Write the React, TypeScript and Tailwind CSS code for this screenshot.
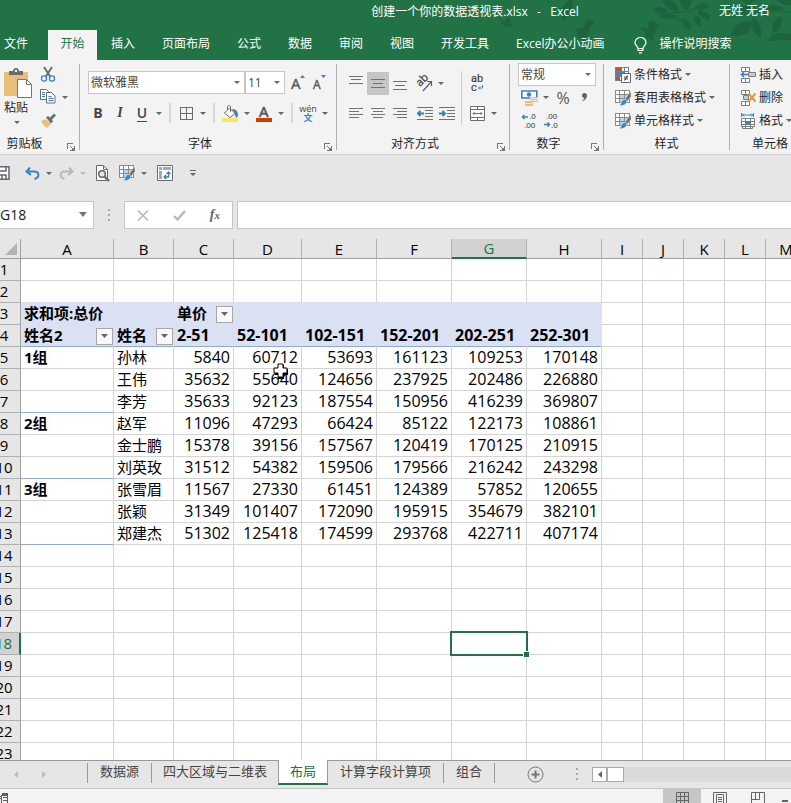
import type { ReactNode } from 'react';
import clsx from 'clsx';

/* ─── Workbook data ─── */
const COLUMNS = [
  { name: 'A', width: 93 },
  { name: 'B', width: 60 },
  { name: 'C', width: 60 },
  { name: 'D', width: 68 },
  { name: 'E', width: 75 },
  { name: 'F', width: 75 },
  { name: 'G', width: 75 },
  { name: 'H', width: 75 },
  { name: 'I', width: 41 },
  { name: 'J', width: 41 },
  { name: 'K', width: 41 },
  { name: 'L', width: 41 },
  { name: 'M', width: 41 },
];

const CELLS: Record<number, string[]> = {
  3: ['求和项:总价', '', '单价'],
  4: ['姓名2', '姓名', '2-51', '52-101', '102-151', '152-201', '202-251', '252-301'],
  5: ['1组', '孙林', '5840', '60712', '53693', '161123', '109253', '170148'],
  6: ['', '王伟', '35632', '55640', '124656', '237925', '202486', '226880'],
  7: ['', '李芳', '35633', '92123', '187554', '150956', '416239', '369807'],
  8: ['2组', '赵军', '11096', '47293', '66424', '85122', '122173', '108861'],
  9: ['', '金士鹏', '15378', '39156', '157567', '120419', '170125', '210915'],
  10: ['', '刘英玫', '31512', '54382', '159506', '179566', '216242', '243298'],
  11: ['3组', '张雪眉', '11567', '27330', '61451', '124389', '57852', '120655'],
  12: ['', '张颖', '31349', '101407', '172090', '195915', '354679', '382101'],
  13: ['', '郑建杰', '51302', '125418', '174599', '293768', '422711', '407174'],
};

const ROWS = Array.from({ length: 23 }, (_, i) => i + 1);
const FILTERS = ['3C', '4A', '4B'];
const GROUP_ENDS = [7, 10, 13];
const ACTIVE = { col: 'G', row: 18 };

const RIBBON_TABS = ['插入', '页面布局', '公式', '数据', '审阅', '视图', '开发工具', 'Excel办公小动画'];

/* ─── Small shared parts ─── */
function Caret({ faded }: { faded?: boolean }) {
  return (
    <svg width="6" height="3" viewBox="0 0 6 3" className={clsx('shrink-0', faded ? 'text-[#b8b8b8]' : 'text-[#5c6b67]')}>
      <path d="M0 0h6L3 3z" fill="currentColor" />
    </svg>
  );
}

function DropButton({ label, faded }: { label: string; faded?: boolean }) {
  return (
    <button aria-label={label} className="flex h-6 w-3 shrink-0 items-center justify-center">
      <Caret faded={faded} />
    </button>
  );
}

type IconButtonProps = { label: string; active?: boolean; children: ReactNode };

function IconButton({ label, active, children }: IconButtonProps) {
  return (
    <button
      aria-label={label}
      className={clsx('flex h-[23px] w-[22px] shrink-0 items-center justify-center', active && 'bg-[#c5c5c5]')}
    >
      {children}
    </button>
  );
}

function Divider() {
  return <span className="mx-1 h-5 w-[2px] shrink-0 bg-[#d8d8d8]" />;
}

type GroupProps = { label: string; className: string; launcher?: boolean; children: ReactNode };

function Group({ label, className, launcher, children }: GroupProps) {
  return (
    <section aria-label={label} className="flex shrink-0">
      <div className={clsx('flex flex-col', className)}>
        <div className="h-[74px]">{children}</div>
        <div className="flex h-5 items-center">
          <span className="flex-1 text-center leading-5">{label}</span>
          {launcher && (
            <button aria-label={`${label}设置`} className="flex h-[14px] w-4 items-end justify-center">
              <svg width="8" height="8" viewBox="0 0 8 8" fill="none" stroke="#777" shapeRendering="crispEdges">
                <path d="M0.5 6V0.5H6M3 3l3 3M7.5 3v4.5H3" />
                <path d="M7 4v3H4z" fill="#777" stroke="none" />
              </svg>
            </button>
          )}
        </div>
      </div>
      <span className="mt-1 h-[86px] w-px bg-[#b0b0b0]" />
    </section>
  );
}

type PickerProps = { label: string; value: string; className: string };

function Picker({ label, value, className }: PickerProps) {
  return (
    <span className={clsx('relative flex h-[23px] shrink-0 items-center', className)}>
      <select
        aria-label={label}
        className="h-full w-full appearance-none border border-[#c6c6c6] bg-white pl-[2px] text-[#444]"
      >
        <option>{value}</option>
      </select>
      <span className="pointer-events-none absolute right-[5px] top-[10px]">
        <Caret />
      </span>
    </span>
  );
}

/* Horizontal strokes: each entry is [x, y, width] */
function Lines({ rows, children }: { rows: number[][]; children?: ReactNode }) {
  return (
    <svg width="16" height="14" viewBox="0 0 16 14">
      {rows.map(([x, y, w]) => (
        <rect key={y} x={x} y={y} width={w} height="1" fill="#6b7572" />
      ))}
      {children}
    </svg>
  );
}

function TableBrushIcon() {
  return (
    <svg width="16" height="16" viewBox="0 0 16 16" fill="none">
      <path d="M.5 .5h14v12H.5z" fill="white" />
      <path d="M5 5h8v7H5z" fill="#b7d3ea" />
      <path d="M.5 .5h14v12H.5zM.5 4.500h14M.5 8.500h14M4.500 .5v12M9.500 .5v12" stroke="#8a8a8a" shapeRendering="crispEdges" />
      <path d="M16 2v4.500l-4 5-2-2 4.500-7z" fill="#66716e" stroke="#f3f3f3" strokeWidth=".5" />
      <path d="M10 9.500c2 0 2.500 2 1.200 3.800C9.800 15.300 7 16 4 15.500c2-.7 1.800-2 2.500-3.700.5-1.300 1.600-2.300 3.500-2.300z" fill="#3f86c6" stroke="#f3f3f3" strokeWidth=".5" />
    </svg>
  );
}

/* ─── Title bar and ribbon tabs ─── */
function TitleArt() {
  return (
    <svg className="absolute right-0 top-0" width="311" height="60" viewBox="0 0 311 60" fill="#1d633d" aria-hidden="true">
      <path d="M19 17l5 5 4-5c4 0 3 4 1 6l6 2-8 2-5-3z" />
      <path d="M81 14c0-8 5-10 8-14h4c0 8-3 14-10 22z" />
      <path d="M96 28l7 0 3-7c3-3 7-1 9 2l-6 5c2 4-1 6-3 8l-1 6-7-5-1-5z" />
      <path d="M160 27l9 2-1-7c3-3 7-2 8 2l4 1-4 3c1 4 0 6-3 7l1 6-8-4-1-5z" />
      <path d="M173 9c5-4 10-1 16 1-6 4-11 4-16-1zM178 16c8-3 14-2 22 0-8 3-15 4-22 0zM182 0h8c7 3 8 6 8 12-8-2-13-5-16-12zM200 0h12l-4 10c-6-2-8-5-8-10zM214 8c5-6 10-6 15-2-3 4-8 5-15 2zM202 18c8 2 10 6 8 12-6-3-8-6-8-12zM215 15c5 1 7 5 5 12-5-4-7-7-5-12zM219 8l12 8-3 5-10-7z" />
      <path d="M251 36c2-10 10-16 21-14 0 9-7 15-21 14zM273 17c7 5 9 12 8 21-8-6-12-12-8-21zM292 34c0-9 3-17 10-17 0 9-3 15-10 17zM287 41c6-8 14-9 24-7v7c-9-3-16 1-24 0zM248 13c9-8 20-8 28-7-8 6-18 9-28 7zM262 0h14l-7 5zM283 7c7-4 15-2 22 1-8 4-16 5-22-1zM296 0h15v5c-6 0-11-1-15-5z" />
      <path d="M173 13c14-1 34 2 46-7M250 17c20-5 40-8 61-5M275 9l25 17M180 13l25 9" fill="none" stroke="#1d633d" />
    </svg>
  );
}

function Header() {
  return (
    <header className="relative h-[60px] shrink-0 bg-[#217346] text-white">
      <TitleArt />
      <div className="relative flex h-[30px]">
        <h1 className="flex-1 whitespace-pre pl-[231px] pt-[2px] text-center leading-5">创建一个你的数据透视表.xlsx   -   Excel</h1>
        <span className="w-[72px] whitespace-nowrap pr-5 pt-[2px] leading-[18px]">无姓 无名</span>
      </div>
      <nav className="relative flex h-[30px] items-center whitespace-nowrap" aria-label="功能区">
        <button className="w-12 pb-[2px] pl-1 text-left">文件</button>
        <button className="mr-[14px] h-full w-[49px] bg-[#f3f3f3] pb-[2px] text-[#217346]">开始</button>
        <div className="flex gap-[27px] pb-[2px]">
          {RIBBON_TABS.map((tab) => (
            <button key={tab}>{tab}</button>
          ))}
        </div>
        <button className="ml-[29px] flex items-center gap-[13px]">
          <svg width="13" height="17" viewBox="0 0 13 17" fill="none" stroke="white" strokeWidth="1.200">
            <path d="M4 11.500C4 9 1 8.500 1 5.800a5.500 5.300 0 0 1 11 0C12 8.500 9 9 9 11.500zM4 11.500v2h5v-2M5 15.800h3" />
          </svg>
          <span className="pb-[2px]">操作说明搜索</span>
        </button>
      </nav>
    </header>
  );
}

/* ─── Ribbon groups ─── */
function ClipboardGroup() {
  return (
    <Group label="剪贴板" launcher className="-ml-[14px] w-[93px]">
      <div className="flex pl-[14px]">
        <button className="flex w-9 shrink-0 flex-col items-center pt-[7px]">
          <svg width="30" height="31" viewBox="0 0 30 31">
            <path d="M1 5h24v24H1z" fill="#e8bf7a" />
            <path d="M6 8V4h4c0-4 6-4 6 0h4v4z" fill="#6b6b6b" />
            <path d="M12 3h2v2h-2z" fill="#f3f3f3" />
            <path d="M14.500 12.500h9l5 5v13h-14z" fill="white" stroke="#777" />
            <path d="M23.500 12.500v5h5" fill="none" stroke="#777" />
          </svg>
          <span className="-ml-1 pt-px leading-[18px]">粘贴</span>
          <span className="mt-1 -ml-[2px]">
            <Caret />
          </span>
        </button>
        <div className="flex flex-col pl-px pt-[2px]">
          <IconButton label="剪切">
            <svg width="16" height="16" viewBox="0 0 16 16" fill="none">
              <path d="M4 1l6.500 10M12 1L5.500 11" stroke="#666f6d" strokeWidth="2" />
              <circle cx="4" cy="12.500" r="2.600" stroke="#3f7fbd" strokeWidth="1.300" />
              <circle cx="12" cy="12.500" r="2.600" stroke="#3f7fbd" strokeWidth="1.300" />
            </svg>
          </IconButton>
          <div className="flex">
            <IconButton label="复制">
              <svg width="16" height="15" viewBox="0 0 16 15" fill="white" stroke="#666f6d">
                <path d="M.5 .5h6l2 2v8h-8z" />
                <path d="M6.500 3.500h5l3.500 3.500v7h-8.500z" />
                <path d="M2 3.500h3M2 5.500h3M2 7.500h3M8.500 7.500h3M8.500 9.500h5M8.500 11.500h5" stroke="#3f7fbd" />
              </svg>
            </IconButton>
            <DropButton label="复制选项" />
          </div>
          <IconButton label="格式刷">
            <svg width="16" height="15" viewBox="0 0 16 15">
              <path d="M1 8l5-2 5 5-4 4-2-2-1 0z" fill="#e8bf7a" />
              <path d="M6 4.500l2-1.500 2 1.500L14 .5l2 2-4 4 1 2-2 2z" fill="#66716e" />
            </svg>
          </IconButton>
        </div>
      </div>
    </Group>
  );
}

function FontGroup() {
  return (
    <Group label="字体" launcher className="w-[256px]">
      <div className="flex items-center pl-2 pt-[11px]">
        <Picker label="字体" value="微软雅黑" className="w-[157px]" />
        <Picker label="字号" value="11" className="w-10" />
        <span className="w-[2px]" />
        <IconButton label="增大字号">
          <svg width="16" height="18" viewBox="0 0 16 18" className="overflow-visible">
            <text x="1" y="15" fontSize="15" fill="#555" stroke="#555" strokeWidth=".4">A</text>
            <path d="M10 4h5l-2.500-3z" fill="#3f7fbd" />
          </svg>
        </IconButton>
        <IconButton label="减小字号">
          <svg width="16" height="18" viewBox="0 0 16 18" className="overflow-visible">
            <text x="1" y="15" fontSize="12" fill="#555" stroke="#555" strokeWidth=".4">A</text>
            <path d="M9 1h5l-2.500 3z" fill="#3f7fbd" />
          </svg>
        </IconButton>
      </div>
      <div className="flex items-center pl-[7px] pt-[7px] text-sm text-[#4a4446]">
        <IconButton label="加粗"><b>B</b></IconButton>
        <IconButton label="倾斜"><i className="font-['Liberation_Serif',serif] font-bold">I</i></IconButton>
        <IconButton label="下划线"><span className="border-b border-[#4a4446] font-semibold leading-4">U</span></IconButton>
        <DropButton label="下划线选项" />
        <Divider />
        <IconButton label="边框">
          <svg width="13" height="13" viewBox="0 0 13 13" fill="none" stroke="#666f6d" shapeRendering="crispEdges">
            <path d="M.5 .5h12v12H.5zM6.500 .5v12M.5 6.500h12" />
          </svg>
        </IconButton>
        <DropButton label="边框选项" />
        <Divider />
        <IconButton label="填充颜色">
          <svg width="16" height="17" viewBox="0 0 16 17">
            <path d="M7.500 3L13 8.500 8 12.500 2.500 8z" fill="white" stroke="#666f6d" />
            <path d="M5.500 5V2c0-2 3-2 3 0v5" fill="none" stroke="#666f6d" />
            <path d="M10 4c4 0 6 2 6 7l-2 2-1.500-5z" fill="#3f7fbd" />
            <path d="M0 13h16v4H0z" fill="#fbe367" />
          </svg>
        </IconButton>
        <DropButton label="填充颜色选项" />
        <IconButton label="字体颜色">
          <svg width="16" height="17" viewBox="0 0 16 17" className="overflow-visible">
            <text x="3" y="12" fontSize="15" fill="#555" stroke="#555" strokeWidth=".6">A</text>
            <path d="M0 13h16v4H0z" fill="#d03b00" />
          </svg>
        </IconButton>
        <DropButton label="字体颜色选项" />
        <Divider />
        <IconButton label="拼音">
          <span className="flex flex-col items-center text-[9px] leading-[9px]">
            <span>wén</span>
            <b className="leading-[9px] text-[#3f7fbd]">文</b>
          </span>
        </IconButton>
        <DropButton label="拼音选项" />
      </div>
    </Group>
  );
}

function AlignmentGroup() {
  return (
    <Group label="对齐方式" launcher className="w-[172px]">
      <div className="flex pt-[11px]">
        <div className="flex flex-col gap-[7px] pl-2">
          <div className="flex items-center">
            <IconButton label="顶端对齐"><Lines rows={[[1, 0, 14], [3, 3, 10], [1, 7, 14]]} /></IconButton>
            <IconButton label="垂直居中" active><Lines rows={[[1, 3, 14], [3, 7, 10], [1, 11, 14]]} /></IconButton>
            <IconButton label="底端对齐"><Lines rows={[[1, 5, 14], [3, 9, 10], [1, 13, 14]]} /></IconButton>
            <span className="w-[2px]" />
            <IconButton label="方向">
              <svg width="18" height="17" viewBox="0 0 18 17" className="overflow-visible">
                <text x="0" y="0" fontSize="11" fill="#444" stroke="#444" strokeWidth=".3" transform="translate(5 12) rotate(-45)">ab</text>
                <path d="M8 16l8-9M12 6.500h4.500V11" fill="none" stroke="#6b5668" strokeWidth="1.200" />
              </svg>
            </IconButton>
            <DropButton label="方向选项" />
          </div>
          <div className="flex items-center">
            <IconButton label="左对齐"><Lines rows={[[1, 1, 14], [1, 4, 10], [1, 7, 14], [1, 10, 10]]} /></IconButton>
            <IconButton label="居中"><Lines rows={[[1, 1, 14], [3, 4, 10], [1, 7, 14], [3, 10, 10]]} /></IconButton>
            <IconButton label="右对齐"><Lines rows={[[1, 1, 14], [5, 4, 10], [1, 7, 14], [5, 10, 10]]} /></IconButton>
            <span className="w-[3px]" />
            <IconButton label="减少缩进">
              <Lines rows={[[0, 0, 16], [8, 3, 8], [8, 6, 8], [8, 9, 8], [0, 12, 16]]}>
                <path d="M7 6.500H1M3.500 4L1 6.500 3.500 9" fill="none" stroke="#3f7fbd" strokeWidth="2" />
              </Lines>
            </IconButton>
            <IconButton label="增加缩进">
              <Lines rows={[[0, 0, 16], [8, 3, 8], [8, 6, 8], [8, 9, 8], [0, 12, 16]]}>
                <path d="M0 6.500h6M3.500 4L6 6.500 3.500 9" fill="none" stroke="#3f7fbd" strokeWidth="2" />
              </Lines>
            </IconButton>
          </div>
        </div>
        <span className="ml-[3px] mr-1 h-[54px] w-px bg-[#cfcfcf]" />
        <div className="flex flex-col gap-[7px]">
          <IconButton label="自动换行">
            <svg width="14" height="20" viewBox="0 0 14 20" className="overflow-visible font-['Roboto',sans-serif]">
              <text x="1" y="9" fontSize="11" fill="#444" stroke="#444" strokeWidth=".2">ab</text>
              <text x="1" y="18" fontSize="11" fill="#444" stroke="#444" strokeWidth=".2">c</text>
              <path d="M12.500 12v3H8.500M10 13.500L8.500 15l1.500 1.500" fill="none" stroke="#3f7fbd" />
            </svg>
          </IconButton>
          <div className="flex items-center">
            <IconButton label="合并后居中">
              <svg width="15" height="15" viewBox="0 0 15 15" fill="none" stroke="#666f6d">
                <path d="M.5 .5h14v14H.5z" fill="white" />
                <path d="M.5 3.500h14M.5 11.500h14M7.500 .5v3M7.500 11.500v3" />
                <path d="M3 7.500h9M4.500 6L3 7.500 4.500 9M10.500 6L12 7.500 10.500 9" stroke="#3f7fbd" />
              </svg>
            </IconButton>
            <DropButton label="合并选项" />
          </div>
        </div>
      </div>
    </Group>
  );
}

function NumberGroup() {
  return (
    <Group label="数字" launcher className="w-[93px]">
      <div className="flex flex-col pl-2 pt-[3px]">
        <Picker label="数字格式" value="常规" className="w-[78px]" />
        <div className="flex h-[23px] items-center text-[#555]">
          <IconButton label="会计数字格式">
            <svg width="17" height="16" viewBox="0 0 17 16">
              <path d="M.8 1h15v7H.8z" fill="white" stroke="#3f7fbd" strokeWidth="1.600" />
              <circle cx="8" cy="4.500" r="2.200" fill="#3f7fbd" />
              <path d="M9 7h8v5H9zM4 11h8v5H4z" fill="#e8bf7a" />
              <path d="M9 8.500h8M9 10.500h8M4 13.500h8" stroke="#f3f3f3" strokeWidth=".8" />
            </svg>
          </IconButton>
          <DropButton label="货币选项" />
          <button aria-label="百分比样式" className="w-[22px] text-base leading-5">%</button>
          <button aria-label="千位分隔样式" className="h-[23px] w-5 pb-[2px]">
            <svg width="5" height="8" viewBox="0 0 5 8" className="mx-auto">
              <path d="M2.500 0C4 0 5 1 5 2.800 5 5.500 3 7.300.8 8l-.4-.8C1.600 6.600 2.300 5.800 2.400 4.800 1 5 0 4 0 2.500 0 1 1 0 2.500 0z" fill="#5c6663" />
            </svg>
          </button>
        </div>
        <div className="flex h-[23px] items-center">
          <IconButton label="增加小数位数">
            <svg width="16" height="16" viewBox="0 0 16 16" className="overflow-visible font-['Liberation_Sans',sans-serif]">
              <path d="M7 4H1.500M3.500 2L1.500 4l2 2" fill="none" stroke="#3f7fbd" strokeWidth="1.500" />
              <text x="8" y="6" fontSize="8" fill="#333">.0</text>
              <text x="3" y="15" fontSize="8" fill="#333">.00</text>
            </svg>
          </IconButton>
          <IconButton label="减少小数位数">
            <svg width="16" height="16" viewBox="0 0 16 16" className="overflow-visible font-['Liberation_Sans',sans-serif]">
              <text x="3" y="6" fontSize="8" fill="#333">.00</text>
              <path d="M1 11.500h5.500M4.500 9.500l2 2-2 2" fill="none" stroke="#3f7fbd" strokeWidth="1.500" />
              <text x="8" y="15" fontSize="8" fill="#333">.0</text>
            </svg>
          </IconButton>
        </div>
      </div>
    </Group>
  );
}

function MenuButton({ icon, label }: { icon: ReactNode; label: string }) {
  return (
    <button className="flex h-[23px] items-center gap-[3px] whitespace-nowrap">
      {icon}
      <span>{label}</span>
      <Caret />
    </button>
  );
}

function StylesGroup() {
  return (
    <Group label="样式" className="w-[125px]">
      <div className="flex flex-col items-start pl-[11px] pt-[3px]">
        <MenuButton
          label="条件格式"
          icon={
            <svg width="16" height="16" viewBox="0 0 16 16" fill="none">
              <path d="M.5 .5h13v13H.5zM.5 4.500h13M.5 9h13M9 .5v13" fill="white" stroke="#7d7d7d" shapeRendering="crispEdges" />
              <path d="M1 1h6v3H1zM1 10h4v3H1z" fill="#c2571a" />
              <path d="M1 5h9v4H1z" fill="#3f86c6" />
              <path d="M6.500 6.500h9v9h-9z" fill="white" stroke="#666" />
              <path d="M9 10h4M9 12h4M12.500 8.500l-3 5" stroke="#444" />
            </svg>
          }
        />
        <MenuButton label="套用表格格式" icon={<TableBrushIcon />} />
        <MenuButton label="单元格样式" icon={<TableBrushIcon />} />
      </div>
    </Group>
  );
}

function CellsGroup() {
  return (
    <Group label="单元格" className="w-20">
      <div className="flex flex-col items-start pl-[10px] pt-[3px]">
        <button className="flex h-[23px] items-center gap-[3px]">
          <svg width="16" height="16" viewBox="0 0 16 16" fill="white" stroke="#7d7d7d">
            <path d="M1.500 .5h8v4h-8zM5.500 .5v4M1.500 11.500h8v4h-8zM5.500 11.500v4" />
            <path d="M8.500 5.500h7v4h-7z" fill="#b7d3ea" />
            <path d="M8 7.500H1.500M4 5L1.500 7.500 4 10" fill="none" stroke="#3f7fbd" strokeWidth="1.600" />
          </svg>
          插入
        </button>
        <button className="flex h-[23px] items-center gap-[3px]">
          <svg width="16" height="16" viewBox="0 0 16 16" fill="white" stroke="#7d7d7d">
            <path d="M1.500 .5h8v4h-8zM5.500 .5v4M1.500 11.500h8v4h-8zM5.500 11.500v4" />
            <path d="M3.500 5.500h5v4h-5z" fill="#b7d3ea" />
            <path d="M8.500 3.500l7 8M15.500 3.500l-7 8" stroke="#e0973a" strokeWidth="2" />
          </svg>
          删除
        </button>
        <MenuButton
          label="格式"
          icon={
            <svg width="16" height="16" viewBox="0 0 16 16" fill="white" stroke="#7d7d7d">
              <path d="M1.500 5.500h13v8h-13zM1.500 8.500h13M1.500 11.500h13M5.500 5.500v10M10.500 5.500v10M2.500 13.500v2h10v-2" />
              <path d="M5 8h5v4H5z" fill="#3f7fbd" stroke="none" />
              <path d="M1.500 0v4M13.500 0v4M2 2h11M4 .5L2.500 2 4 3.500M11 .5L12.500 2 11 3.500" fill="none" stroke="#3f7fbd" />
            </svg>
          }
        />
      </div>
    </Group>
  );
}

/* ─── Quick access and formula bars ─── */
function QuickAccess() {
  return (
    <div className="flex h-9 shrink-0 items-center" role="toolbar" aria-label="快速访问">
      <button aria-label="保存" className="w-[21px]">
        <svg width="10" height="14" viewBox="6 0 10 14" fill="none" stroke="#6d6472" strokeWidth="1.500">
          <path d="M1 .8h14v12.500H1z" fill="white" />
          <path d="M4 1v4h8V1M4 13V9h8v4M8 9v4" />
        </svg>
      </button>
      <IconButton label="撤消">
        <svg width="15" height="13" viewBox="0 0 15 13" fill="none" stroke="#3f7fbd" strokeWidth="2">
          <path d="M5 .5L1.500 4.500 6 8M2 4.500h7c5.500 0 6 6 .5 7.500" />
        </svg>
      </IconButton>
      <DropButton label="撤消列表" />
      <IconButton label="恢复">
        <svg width="15" height="13" viewBox="0 0 15 13" fill="none" stroke="#b8b8b8" strokeWidth="2">
          <path d="M10 .5l3.500 4L9 8M13 4.500H6c-5.500 0-6 6-.5 7.500" />
        </svg>
      </IconButton>
      <DropButton label="恢复列表" faded />
      <span className="w-[2px]" />
      <IconButton label="打印预览">
        <svg width="15" height="17" viewBox="0 0 15 17" fill="none" stroke="#666f6d">
          <path d="M1.500 .5h7l4 4v11h-11z" fill="white" />
          <path d="M8.500 .5v4h4" />
          <circle cx="7" cy="9" r="3.300" strokeWidth="1.600" fill="#e6e6e6" />
          <path d="M9.500 11.500l4.500 4.500" strokeWidth="2.400" />
        </svg>
      </IconButton>
      <span className="w-[3px]" />
      <IconButton label="套用表格格式"><TableBrushIcon /></IconButton>
      <DropButton label="表格格式列表" />
      <span className="w-1" />
      <IconButton label="数据透视表">
        <svg width="16" height="16" viewBox="0 0 16 16" fill="none">
          <path d="M.5 .5h15v15H.5z" fill="white" stroke="#666f6d" />
          <path d="M2 2h3v3H2zM6 2h8v3H6zM2 6h3v8H2z" fill="#a8a8a8" />
          <path d="M7 12h4.500V7M9 10l-2 2 2 2M9.500 9l2-2 2 2" stroke="#3f7fbd" strokeWidth="1.300" />
        </svg>
      </IconButton>
      <button aria-label="自定义快速访问工具栏" className="ml-[9px] flex h-6 w-4 flex-col items-center justify-center gap-[2px]">
        <span className="h-px w-[6px] bg-[#5c6b67]" />
        <Caret />
      </button>
    </div>
  );
}

function DragDots() {
  return (
    <span className="flex flex-col gap-[3px]" aria-hidden="true">
      <i className="h-[2px] w-[2px] bg-[#aaa]" />
      <i className="h-[2px] w-[2px] bg-[#aaa]" />
      <i className="h-[2px] w-[2px] bg-[#aaa]" />
    </span>
  );
}

function FormulaBar() {
  return (
    <div className="flex h-12 shrink-0 items-start pt-[10px]">
      <div className="relative h-7 w-[94px]">
        <input aria-label="名称框" defaultValue="G18" className="h-full w-full border border-l-0 border-[#c6c6c6] bg-white pb-px text-sm text-[#222]" />
        <button aria-label="名称列表" className="absolute right-[7px] top-[11px]">
          <svg width="8" height="5" viewBox="0 0 8 5"><path d="M0 0h8L4 5z" fill="#777" /></svg>
        </button>
      </div>
      <span className="flex h-7 w-[30px] items-center justify-center">
        <DragDots />
      </span>
      <div className="mr-1 flex h-7 w-[109px] items-center justify-around border border-[#c6c6c6] bg-white">
        <button aria-label="取消">
          <svg width="12" height="11" viewBox="0 0 12 11" stroke="#b8b8b8" strokeWidth="1.600"><path d="M1 .5l10 10M11 .5L1 10.500" /></svg>
        </button>
        <button aria-label="输入">
          <svg width="13" height="11" viewBox="0 0 13 11" fill="none" stroke="#b8b8b8" strokeWidth="2.400"><path d="M1 6l3.500 3.500L12 1" /></svg>
        </button>
        <button aria-label="插入函数" className="font-['Liberation_Serif',serif] text-sm font-bold italic leading-4 text-[#666]">
          f<span className="text-[11px]">x</span>
        </button>
      </div>
      <input aria-label="编辑栏" className="h-7 min-w-0 flex-1 border border-r-0 border-[#c6c6c6] bg-white px-1 text-sm" />
    </div>
  );
}

/* ─── Worksheet grid ─── */
function FilterButton({ label }: { label: string }) {
  return (
    <button aria-label={`${label}筛选`} className="mt-px flex h-[17px] w-[17px] shrink-0 items-center justify-center border border-[#a6a6a6] bg-[#f8f8f8]">
      <svg width="7" height="4" viewBox="0 0 7 4"><path d="M0 0h7L3.500 4z" fill="#666" /></svg>
    </button>
  );
}

function Cell({ col, row }: { col: number; row: number }) {
  const text = CELLS[row]?.[col] ?? '';
  const name = COLUMNS[col].name;
  const pivotHead = (row === 3 || row === 4) && col < 8;
  const selected = name === ACTIVE.col && row === ACTIVE.row;
  const numeric = row > 4 && col > 1;
  const blueLine = (row === 4 && col < 8) || (col === 0 && GROUP_ENDS.includes(row));
  const hiddenLine = (row === 2 || row === 3) && col < 8;

  return (
    <td
      className={clsx(
        'h-[22px] border-b border-r p-0 leading-[21px]',
        pivotHead ? 'border-r-[#d9e1f2] bg-[#d9e1f2]' : 'border-r-[#d4d4d4]',
        blueLine && 'border-b-[#8ea9db]',
        hiddenLine && 'border-b-[#d9e1f2]',
        !blueLine && !hiddenLine && 'border-b-[#d4d4d4]',
        (pivotHead || col === 0) && 'font-bold',
        numeric || (row === 4 && col > 1) ? 'text-base leading-[21px]' : 'text-[15px]',
        selected && 'relative',
      )}
    >
      {text && (
        <div className={clsx('flex h-[21px] items-center whitespace-nowrap pl-[3px]', numeric ? 'justify-end pr-[3px]' : 'justify-between')}>
          {text}
          {FILTERS.includes(`${row}${name}`) && <FilterButton label={text} />}
        </div>
      )}
      {selected && (
        <span className="absolute -inset-[2px] border-2 border-[#217346]">
          <i className="absolute -bottom-1 -right-1 h-[7px] w-[7px] border border-white bg-[#217346]" />
        </span>
      )}
    </td>
  );
}

function Grid() {
  return (
    <main className="relative min-h-0 flex-1 overflow-hidden">
      <table className="-ml-3 w-[819px] table-fixed border-separate border-spacing-0 bg-white text-black">
        <colgroup>
          <col className="w-[33px]" />
          {COLUMNS.map((c) => (
            <col key={c.name} style={{ width: c.width }} />
          ))}
        </colgroup>
        <thead>
          <tr className="h-5 bg-[#e6e6e6]">
            <th className="h-5 border-b border-r border-[#a0a0a0] p-0">
              <button aria-label="全选" className="ml-auto mr-[3px] block">
                <svg width="12" height="12" viewBox="0 0 12 12"><path d="M12 0v12H0z" fill="#b4b4b4" /></svg>
              </button>
            </th>
            {COLUMNS.map((c) => (
              <th
                key={c.name}
                className={clsx(
                  'h-5 border-r border-r-[#b0b0b0] p-0 text-[15px] font-normal leading-[18px]',
                  c.name === ACTIVE.col ? 'border-b-2 border-b-[#217346] bg-[#d2d2d2] text-[#217346]' : 'border-b border-b-[#a0a0a0]',
                )}
              >
                {c.name}
              </th>
            ))}
          </tr>
        </thead>
        <tbody>
          {ROWS.map((row) => (
            <tr key={row}>
              <th
                className={clsx(
                  'h-[22px] border-b border-b-[#b0b0b0] p-0 text-[15px] font-normal leading-[21px]',
                  row === ACTIVE.row ? 'border-r-2 border-r-[#217346] bg-[#d2d2d2] text-[#217346]' : 'border-r border-r-[#a0a0a0] bg-[#e6e6e6]',
                )}
              >
                {row}
              </th>
              {COLUMNS.map((c, i) => (
                <Cell key={c.name} col={i} row={row} />
              ))}
            </tr>
          ))}
        </tbody>
      </table>
      {/* Mouse pointer */}
      <svg className="absolute left-[273px] top-[124px]" width="16" height="16" viewBox="0 0 16 16">
        <path d="M5 2h6v4h4v6h-4v4H5v-4H2V6h3z" fill="black" />
        <path d="M5 1h5v4h4v5h-4v4H5v-4H1V5h4z" fill="white" stroke="black" />
      </svg>
    </main>
  );
}

/* ─── Sheet tabs and status bar ─── */
function SheetTab({ name }: { name: string }) {
  return <button className="h-5 border-r border-[#999] px-3 pb-[3px] leading-[17px]">{name}</button>;
}

function SheetBar() {
  return (
    <footer className="shrink-0">
      <div className="flex h-7 items-start border-t border-[#999] text-[13px] text-[#444]">
        <div className="flex h-[26px] w-[87px] items-center gap-6 pl-[14px]">
          <button aria-label="上一个工作表"><svg width="4" height="7" viewBox="0 0 4 7"><path d="M4 0v7L0 3.500z" fill="#bbb" /></svg></button>
          <button aria-label="下一个工作表"><svg width="4" height="7" viewBox="0 0 4 7"><path d="M0 0v7l4-3.500z" fill="#bbb" /></svg></button>
        </div>
        <div className="flex whitespace-nowrap">
          <div className="mt-[2px] flex h-5 border-l border-[#999]">
            <SheetTab name="数据源" />
            <button className="h-5 px-[11px] pb-[3px] leading-[17px]">四大区域与二维表</button>
          </div>
          <button className="-mt-px h-[25px] border-x border-b-2 border-x-[#999] border-b-[#217346] bg-white px-[11px] leading-[23px] text-[#217346]">布局</button>
          <div className="mt-[2px] flex h-5">
            <SheetTab name="计算字段计算项" />
            <SheetTab name="组合" />
          </div>
        </div>
        <button aria-label="新工作表" className="ml-8 mt-[5px]">
          <svg width="17" height="17" viewBox="0 0 17 17" fill="none" stroke="#777">
            <circle cx="8.500" cy="8.500" r="7.500" />
            <path d="M4.500 8.500h8M8.500 4.500v8" strokeWidth="2" />
          </svg>
        </button>
        <span className="ml-8 mr-[14px] mt-[7px]">
          <DragDots />
        </span>
        <div className="mt-[6px] flex h-[15px] flex-1 bg-[#dadbd9]">
          <button aria-label="向左滚动" className="flex w-[15px] items-center justify-center border border-[#ababab] bg-white">
            <svg width="4" height="7" viewBox="0 0 4 7"><path d="M4 0v7L0 3.500z" fill="#666" /></svg>
          </button>
          <span className="w-[17px] border border-[#ababab] bg-white" />
        </div>
      </div>
      <div className="flex h-[15px] items-start overflow-hidden border-t border-[#c6c6c6] bg-[#f3f3f3]">
        <button aria-label="宏录制" className="mt-1">
          <svg width="8" height="11" viewBox="0 0 8 11" fill="none" stroke="#6b5668">
            <path d="M0 3.500h1M7.500 2v9M0 5.500h1M1.500 2v9M3 4.500h4M3 7.500h4M3 10.500h4" />
            <path d="M2 0h6v3H2z" fill="#6b5668" stroke="none" />
          </svg>
        </button>
        <div className="ml-auto flex">
          <button aria-label="普通视图" className="flex h-[14px] w-[38px] justify-center bg-[#c6c6c6] pt-[3px]">
            <svg width="13" height="13" viewBox="0 0 13 13" fill="none" stroke="#5f6866"><path d="M.5 .5h12v12H.5zM4.500 .5v12M8.500 .5v12M.5 4.500h12M.5 8.500h12" /></svg>
          </button>
          <button aria-label="页面布局视图" className="flex h-[14px] w-[38px] justify-center pt-[3px]">
            <svg width="14" height="13" viewBox="0 0 14 13" fill="none" stroke="#5f6866"><path d="M.5 .5h13v13H.5zM3.500 2.500h7v10h-7zM5 5.500h4M5 7.500h4M5 9.500h4" /></svg>
          </button>
          <button aria-label="分页预览" className="flex h-[14px] w-[38px] justify-center pt-[3px]">
            <svg width="14" height="13" viewBox="0 0 14 13" fill="none" stroke="#5f6866"><path d="M.5 13V.5h13V13M.5 7.500h8v-7M4.500 .5v7" /></svg>
          </button>
          <button aria-label="缩小" className="w-[14px] pl-[5px] pt-[9px]">
            <span className="block h-[2px] w-[6px] bg-[#5f6866]" />
          </button>
        </div>
      </div>
    </footer>
  );
}

export default function App() {
  return (
    <div className="flex h-screen w-full flex-col overflow-hidden bg-[#e6e6e6] font-['Open_Sans','Noto_Sans_CJK_SC',sans-serif] text-xs text-[#262626]">
      <Header />
      <div className="flex h-[95px] shrink-0 overflow-hidden border-b border-[#d2d2d2] bg-[#f3f3f3]">
        <ClipboardGroup />
        <FontGroup />
        <AlignmentGroup />
        <NumberGroup />
        <StylesGroup />
        <CellsGroup />
      </div>
      <QuickAccess />
      <FormulaBar />
      <Grid />
      <SheetBar />
    </div>
  );
}
